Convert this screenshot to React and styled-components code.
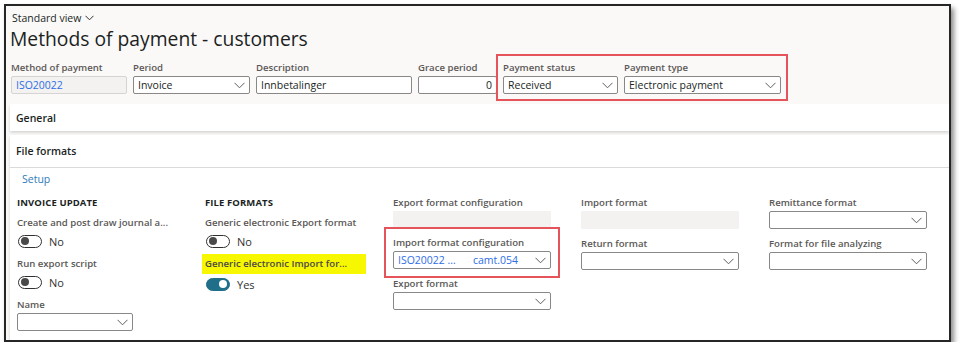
import React from 'react';
import styled, { createGlobalStyle } from 'styled-components';

const GlobalStyle = createGlobalStyle`
  body {
    margin: 0;
    background: #ffffff;
    font-family: "Open Sans", "Noto Sans", sans-serif;
    color: #323130;
  }
  * { box-sizing: border-box; }
`;

const Frame = styled.div`
  margin: 4px 0 0 4px;
  width: 947px;
  height: 338px;
  border: 2px solid #262626;
  background: #faf9f8;
  box-shadow: 3px 4px 5px rgba(0, 0, 0, 0.45);
  overflow: hidden;
  padding: 0 0 0 4px;
`;

const Header = styled.div`
  padding: 4px 0 0 0;
`;

const ViewSwitch = styled.div`
  font-size: 10.5px;
  line-height: 16px;
  padding-left: 2px;
  display: flex;
  align-items: center;
  gap: 4px;
  color: #201f1e;
`;

const Title = styled.h1`
  margin: 0;
  font-size: 19.3px;
  font-weight: 400;
  line-height: 26px;
  color: #201f1e;
`;

const FieldRow = styled.div`
  display: flex;
  gap: 6px;
  margin-top: 9px;
  padding-left: 1px;
`;

const Highlight = styled.div`
  display: flex;
  gap: 6px;
  outline: 2px solid #e5535b;
  outline-offset: 5px;
`;

const Field = styled.div`
  display: flex;
  flex-direction: column;
  width: ${(p) => p.$w || 158}px;
`;

const Label = styled.div`
  font-size: 9.6px;
  line-height: 14px;
  font-weight: 600;
  color: #5a5856;
  margin-bottom: 1px;
  white-space: nowrap;
`;

const MarkedLabel = styled(Label)`
  background: #f7f700;
  width: 164px;
  margin: -3px 0 0 -3px;
  padding: 3px 3px;
  color: #4a4846;
`;

const Input = styled.div`
  height: ${(p) => p.$h || 18}px;
  border: 1px solid ${(p) => (p.$readonly ? '#d6d4d2' : '#8a8886')};
  background: ${(p) => (p.$readonly ? '#f3f2f1' : '#ffffff')};
  border-radius: 2px;
  font-size: 10.5px;
  line-height: 16px;
  padding: 0 4px;
  display: flex;
  align-items: center;
  justify-content: ${(p) => (p.$right ? 'flex-end' : 'space-between')};
  color: ${(p) => (p.$link ? '#2e6ee6' : '#201f1e')};
  white-space: nowrap;
`;

const Blank = styled.div`
  height: ${(p) => p.$h || 17}px;
  background: #f3f2f1;
`;

const Chevron = () => (
  <svg width="11" height="7" viewBox="0 0 11 7" fill="none">
    <path d="M0.5 0.8 L5.5 5.8 L10.5 0.8" stroke="#605e5c" strokeWidth="1" />
  </svg>
);

const Select = ({ value, link }) => (
  <Input $link={link}>
    <span>{value}</span>
    <Chevron />
  </Input>
);

const ConfigValue = styled.span`
  display: flex;
  gap: 17px;
`;

const Card = styled.div`
  background: #ffffff;
  box-shadow: 0 1.6px 3px rgba(0, 0, 0, 0.16);
  margin-top: ${(p) => p.$top || 0}px;
`;

const CardHeader = styled.div`
  height: ${(p) => p.$h || 27}px;
  display: flex;
  align-items: center;
  padding-left: 6px;
  font-size: 10.5px;
  font-weight: 600;
  color: #201f1e;
  border-bottom: ${(p) => (p.$line ? '1px solid #dcdad8' : 'none')};
`;

const SetupLink = styled.div`
  font-size: 10.5px;
  line-height: 16px;
  color: #2f7ab8;
  padding: 3px 12px 2px;
`;

const Columns = styled.div`
  display: grid;
  grid-template-columns: repeat(5, 188px);
  padding: 7px 0 6px 7px;
  height: 171px;
`;

const Column = styled.div`
  display: flex;
  flex-direction: column;
  align-items: flex-start;
  gap: ${(p) => p.$gap || 6}px;
`;

const Heading = styled.div`
  font-size: 9.5px;
  line-height: 14px;
  font-weight: 700;
  color: #201f1e;
  letter-spacing: 0.1px;
`;

const ToggleRow = styled.div`
  display: flex;
  align-items: center;
  gap: 7px;
  height: 20px;
  font-size: 11px;
  color: #323130;
`;

const Track = styled.div`
  width: 24px;
  height: 13px;
  border-radius: 7px;
  border: 1px solid ${(p) => (p.$on ? '#1f6f8b' : '#323130')};
  background: ${(p) => (p.$on ? '#1f6f8b' : '#ffffff')};
  display: flex;
  align-items: center;
  justify-content: ${(p) => (p.$on ? 'flex-end' : 'flex-start')};
  padding: 0 2px;
  margin-left: 1px;
`;

const Knob = styled.div`
  width: 8px;
  height: 8px;
  border-radius: 50%;
  background: ${(p) => (p.$on ? '#ffffff' : '#4a4a4a')};
`;

const Toggle = ({ on }) => (
  <ToggleRow>
    <Track $on={on}>
      <Knob $on={on} />
    </Track>
    <span>{on ? 'Yes' : 'No'}</span>
  </ToggleRow>
);

const Marked = styled.div`
  outline: 2px solid #e5535b;
  outline-offset: 7px;
`;

export default function App() {
  return (
    <>
      <GlobalStyle />
      <Frame>
        <Header>
          <ViewSwitch>
            Standard view
            <svg width="9" height="6" viewBox="0 0 9 6" fill="none">
              <path d="M0.5 0.8 L4.5 4.8 L8.5 0.8" stroke="#323130" strokeWidth="1" />
            </svg>
          </ViewSwitch>
          <Title>Methods of payment - customers</Title>
          <FieldRow>
            <Field $w={116}>
              <Label>Method of payment</Label>
              <Input $readonly $link>ISO20022</Input>
            </Field>
            <Field $w={117}>
              <Label>Period</Label>
              <Select value="Invoice" />
            </Field>
            <Field $w={156}>
              <Label>Description</Label>
              <Input>Innbetalinger</Input>
            </Field>
            <Field $w={79}>
              <Label>Grace period</Label>
              <Input $right>0</Input>
            </Field>
            <Highlight>
              <Field $w={115}>
                <Label>Payment status</Label>
                <Select value="Received" />
              </Field>
              <Field $w={157}>
                <Label>Payment type</Label>
                <Select value="Electronic payment" />
              </Field>
            </Highlight>
          </FieldRow>
        </Header>

        <Card $top={10}>
          <CardHeader>General</CardHeader>
        </Card>

        <Card $top={4}>
          <CardHeader $h={33} $line>File formats</CardHeader>
          <SetupLink>Setup</SetupLink>
          <Columns>
            <Column>
              <Heading>INVOICE UPDATE</Heading>
              <Field>
                <Label>Create and post draw journal a...</Label>
                <Toggle />
              </Field>
              <Field>
                <Label>Run export script</Label>
                <Toggle />
              </Field>
              <Field $w={116}>
                <Label>Name</Label>
                <Select value="" />
              </Field>
            </Column>

            <Column>
              <Heading>FILE FORMATS</Heading>
              <Field>
                <Label>Generic electronic Export format</Label>
                <Toggle />
              </Field>
              <Field>
                <MarkedLabel>Generic electronic Import for...</MarkedLabel>
                <Toggle on />
              </Field>
            </Column>

            <Column $gap={8}>
              <Field>
                <Label>Export format configuration</Label>
                <Blank $h={17} />
              </Field>
              <Marked>
                <Field>
                  <Label>Import format configuration</Label>
                  <Input $link>
                    <ConfigValue>
                      <span>ISO20022 ...</span>
                      <span>camt.054</span>
                    </ConfigValue>
                    <Chevron />
                  </Input>
                </Field>
              </Marked>
              <Field>
                <Label>Export format</Label>
                <Select value="" />
              </Field>
            </Column>

            <Column $gap={8}>
              <Field>
                <Label>Import format</Label>
                <Blank $h={18} />
              </Field>
              <Field>
                <Label>Return format</Label>
                <Select value="" />
              </Field>
            </Column>

            <Column $gap={8}>
              <Field>
                <Label>Remittance format</Label>
                <Select value="" />
              </Field>
              <Field>
                <Label>Format for file analyzing</Label>
                <Select value="" />
              </Field>
            </Column>
          </Columns>
        </Card>
      </Frame>
    </>
  );
}
